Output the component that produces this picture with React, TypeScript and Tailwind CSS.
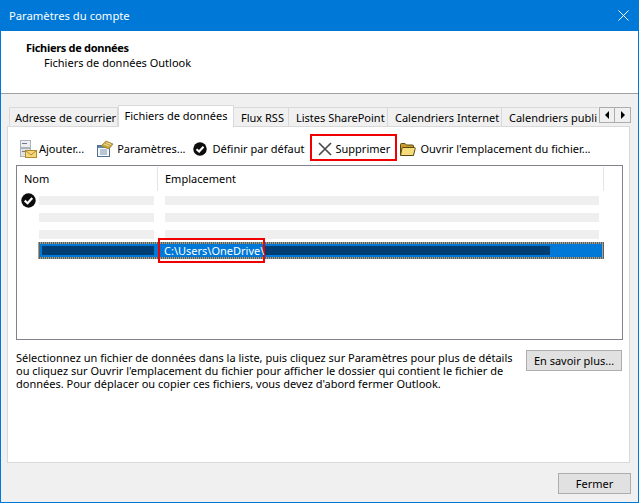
import React from 'react';

const font = "font-['Noto_Sans','Open_Sans',sans-serif]";

const tabs = [
  { label: 'Adresse de courrier', w: 'w-[109px]' },
  { label: 'Fichiers de données', w: 'w-[116px]', active: true },
  { label: 'Flux RSS', w: 'w-[55px]' },
  { label: 'Listes SharePoint', w: 'w-[99px]' },
  { label: 'Calendriers Internet', w: 'w-[114px]' },
  { label: 'Calendriers publi', w: 'w-[96px]' },
];

function AddIcon() {
  return (
    <svg width="18" height="18" viewBox="0 0 18 18">
      <rect x="1.5" y="0.5" width="10" height="7" fill="#eceef1" stroke="#aab1b9" />
      <rect x="1.5" y="8.5" width="10" height="8" fill="#dfe2e6" stroke="#aab1b9" />
      <rect x="3" y="3" width="5" height="1" fill="#6f7a86" />
      <rect x="3" y="11" width="5" height="1" fill="#6f7a86" />
      <rect x="6.5" y="10.5" width="11" height="7" fill="#f3d77a" stroke="#b48a2c" />
      <path d="M6.5 10.5 L12 15 L17.5 10.5" fill="none" stroke="#b48a2c" />
    </svg>
  );
}

function SettingsIcon() {
  return (
    <svg width="18" height="18" viewBox="0 0 18 18">
      <rect x="1.5" y="5.5" width="12" height="11" fill="#f4f7fb" stroke="#51708f" />
      <rect x="2" y="6" width="11" height="2" fill="#5d86b4" />
      <path d="M4 10h7M4 12h7M4 14h7" stroke="#7d93aa" />
      <path d="M5 6 L10 1 L17 4 L13 9 Z" fill="#c9a63c" stroke="#8c7424" strokeWidth="0.7" />
      <path d="M8 4l5 2M10 2.5l5 2" stroke="#efe0a0" />
    </svg>
  );
}

function CheckBadge({ size }: { size: number }) {
  return (
    <svg width={size} height={size} viewBox="0 0 16 16">
      <circle cx="8" cy="8" r="7.7" fill="#0c0c0c" />
      <path d="M4 8.2 L7 10.9 L12 5.4" fill="none" stroke="#ffffff" strokeWidth="2.4" />
    </svg>
  );
}

function DeleteIcon() {
  return (
    <svg width="14" height="14" viewBox="0 0 14 14">
      <path d="M1 1 L13 13 M13 1 L1 13" stroke="#4b4b4b" strokeWidth="1.7" />
    </svg>
  );
}

function FolderIcon() {
  return (
    <svg width="17" height="15" viewBox="0 0 17 15">
      <path d="M1.5 13 V2.5 Q1.5 1.5 2.5 1.5 H6 L7.5 3 H13.5 Q14.5 3 14.5 4 V13 Z" fill="#c89a2e" stroke="#5a4a10" />
      <path d="M1.5 13.5 L3 6 Q3.2 5.5 4 5.5 H15.5 Q16.5 5.5 16.2 6.5 L14.5 13.5 Z" fill="#f7dc7c" stroke="#5a4a10" />
    </svg>
  );
}

function Tab({ label, w, active }: { label: string; w: string; active?: boolean }) {
  if (active) {
    return (
      <div className={`${w} h-[22px] -mb-px z-10 bg-white border border-b-0 border-[#d9d9d9] flex justify-center pt-[2px] whitespace-nowrap`}>
        {label}
      </div>
    );
  }
  return (
    <div className={`${w} h-[19px] border border-l-0 border-b-0 border-[#d9d9d9] flex pl-[7px] pt-[2px] first:border-l first:pl-[5px] nth-last-2:border-r-0 whitespace-nowrap overflow-hidden`}>
      {label}
    </div>
  );
}

function Tool({ icon, label, gap }: { icon: React.ReactNode; label: string; gap: string }) {
  return (
    <div className={`flex items-center ${gap} pt-[3px] whitespace-nowrap`}>
      {icon}
      <span>{label}</span>
    </div>
  );
}

export default function App() {
  return (
    <div className={`${font} w-[640px] h-[503px] bg-white text-[11px] leading-[16px] text-[#000] pr-px`}>
      <div className="h-[503px] border-x border-b border-[#0078d7] flex flex-col bg-[#f0f0f0]">
        <div className="h-[31px] bg-[#0078d7] -mx-px flex items-center justify-between pl-[9px] pr-[10px] text-white text-[11.25px]">
          <span>Paramètres du compte</span>
          <svg width="11" height="11" viewBox="0 0 11 11">
            <path d="M0.5 0.5 L10.5 10.5 M10.5 0.5 L0.5 10.5" stroke="#fff" strokeWidth="1" />
          </svg>
        </div>

        <div className="h-[63px] bg-white border-b border-[#a0a0a0] pt-[9px] pl-[25px]">
          <div className="font-bold leading-[15px] tracking-[-0.3px]">Fichiers de données</div>
          <div className="pl-[18px]">Fichiers de données Outlook</div>
        </div>

        <div className="flex-1 pt-[11px] pl-[6px] pr-[7px] flex flex-col">
          <div className="flex items-end h-[21px] pl-[2px]">
            {tabs.map((t) => (
              <Tab key={t.label} label={t.label} w={t.w} active={t.active} />
            ))}
            <div className="ml-auto self-start mt-[2px] flex">
              <div className="w-[16px] h-[16px] bg-[#f0f0f0] border border-[#adadad] flex items-center justify-center">
                <span className="w-0 h-0 border-y-[4px] border-y-transparent border-r-[4px] border-r-black" />
              </div>
              <div className="w-[16px] h-[16px] bg-[#f0f0f0] border border-l-0 border-[#adadad] flex items-center justify-center">
                <span className="w-0 h-0 border-y-[4px] border-y-transparent border-l-[4px] border-l-black" />
              </div>
            </div>
          </div>

          <div className="w-[623px] h-[337px] bg-white border border-[#d9d9d9] pt-[7px] pl-[8px] pr-[7px]">
            <div className="h-[27px] flex items-center pl-[3px]">
              <Tool icon={<AddIcon />} label="Ajouter..." gap="gap-[2px]" />
              <div className="ml-[12px]"><Tool icon={<SettingsIcon />} label="Paramètres..." gap="gap-[3px]" /></div>
              <div className="ml-[7px]"><Tool icon={<CheckBadge size={14} />} label="Définir par défaut" gap="gap-[6px]" /></div>
              <div className="ml-[6px] h-[27px] w-[87px] shrink-0 border-2 border-[#f00000] flex items-center pl-[6px]">
                <Tool icon={<DeleteIcon />} label="Supprimer" gap="gap-[3px]" />
              </div>
              <div className="ml-[2px]"><Tool icon={<FolderIcon />} label="Ouvrir l'emplacement du fichier..." gap="gap-[4px]" /></div>
            </div>

            <div className="mt-[4px] w-[607px] h-[175px] border border-[#82828c] relative">
              <div className="flex h-[25px] pt-[1px]">
                <div className="w-[141px] pl-[7px] pt-[4px] border-r border-[#e5e5e5]">Nom</div>
                <div className="w-[446px] pl-[7px] pt-[4px] border-r border-[#e5e5e5]">Emplacement</div>
              </div>
              <div className="pl-[22px] mt-[5px] relative">
                <div className="absolute left-[4px] -top-[3px]"><CheckBadge size={15} /></div>
                <div className="flex gap-[11px]">
                  <div className="w-[115px] h-[9px] bg-[#efefef]" />
                  <div className="w-[434px] h-[9px] bg-[#efefef]" />
                </div>
                <div className="flex gap-[11px] mt-[8px]">
                  <div className="w-[115px] h-[9px] bg-[#efefef]" />
                  <div className="w-[434px] h-[9px] bg-[#efefef]" />
                </div>
                <div className="flex gap-[11px] mt-[8px]">
                  <div className="w-[115px] h-[9px] bg-[#efefef]" />
                  <div className="w-[434px] h-[9px] bg-[#efefef]" />
                </div>
              </div>
              <div className="ml-[21px] mt-[3px] w-[566px] h-[17px] p-[2px] bg-[repeating-linear-gradient(90deg,#f58a1f_0_1px,#0078d7_1px_2px)]">
                <div className="h-full bg-[#0078d7] flex items-center gap-[11px] pl-[2px]">
                  <div className="w-[112px] h-[9px] bg-[#003e73]" />
                  <div className="w-[385px] h-[9px] bg-[#003e73]" />
                </div>
              </div>
              <div className="absolute left-[141px] top-[72px] w-[107px] h-[25px] border-2 border-[#f00000] text-white flex items-center">
                <span className="w-full h-[13px] leading-[13px] pl-[4px] bg-[#0078d7]">C:\Users\OneDrive\</span>
              </div>
            </div>

            <div className="flex mt-[10px]">
              <p className="w-[505px] leading-[13px] pt-[1px]">
                Sélectionnez un fichier de données dans la liste, puis cliquez sur Paramètres pour plus de détails ou cliquez sur Ouvrir l'emplacement du fichier pour afficher le dossier qui contient le fichier de données. Pour déplacer ou copier ces fichiers, vous devez d'abord fermer Outlook.
              </p>
              <div className="ml-auto w-[96px] h-[21px] bg-[#e1e1e1] border border-[#adadad] flex items-center justify-center">
                En savoir plus...
              </div>
            </div>
          </div>

          <div className="flex justify-end mt-[10px]">
            <div className="w-[73px] h-[21px] bg-[#e1e1e1] border border-[#adadad] flex items-center justify-center">
              Fermer
            </div>
          </div>
        </div>
      </div>
    </div>
  );
}
